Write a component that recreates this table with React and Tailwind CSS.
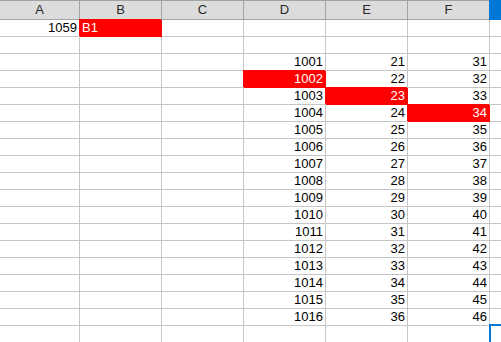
import React from "react";

const widths = ["w-[80px]", "w-[82px]", "w-[82px]", "w-[82px]", "w-[82px]", "w-[82px]"];
const letters = ["A", "B", "C", "D", "E", "F"];

const empty = [null, null, null, null, null, null];

// sheet contents, row by row
const rows = [
  [{ v: "1059" }, { v: "B1", red: true, left: true }, null, null, null, null],
  empty,
  ...Array.from({ length: 16 }, (_, i) => [
    null,
    null,
    null,
    { v: String(1001 + i), red: i === 1 },
    { v: String(21 + i), red: i === 2 },
    { v: String(31 + i), red: i === 3 },
  ]),
  empty,
];

const Cell = ({ cell, w }) => (
  <div
    className={`${w} h-[17px] shrink-0 border-r border-b px-[2px] leading-4 whitespace-nowrap overflow-hidden ${
      cell?.red
        ? "bg-[#ff0000] text-white border-[#ff0000] shadow-[-1px_-1px_0_0_#ff0000]"
        : "border-[#c6c6c6] text-black"
    } ${cell?.left ? "text-left" : "text-right"}`}
  >
    {cell?.v}
  </div>
);

const App = () => {
  return (
    <div className="w-[501px] h-[342px] overflow-hidden bg-white font-['Liberation_Sans',Arial,sans-serif] text-[13px]">
      {/* column headers */}
      <div className="flex h-[20px] bg-[#dcdcdc]">
        {letters.map((l, i) => (
          <div
            key={l}
            className={`${widths[i]} shrink-0 border-t border-b border-r border-[#a3a3a3] text-center leading-[18px] text-[#2a2a2a]`}
          >
            {l}
          </div>
        ))}
        <div className="flex-1 bg-[#0078d7] shadow-[-1px_0_0_0_#0078d7]"></div>
      </div>

      {/* cells */}
      {rows.map((row, r) => (
        <div key={r} className="flex">
          {row.map((cell, c) => (
            <Cell key={c} cell={cell} w={widths[c]} />
          ))}
          <div className="relative flex-1 h-[17px] border-b border-[#c6c6c6]">
            {r === rows.length - 1 && (
              <div className="absolute left-[-1px] top-[-2px] w-[30px] h-[30px] border-l-2 border-t-2 border-[#0078d7]"></div>
            )}
          </div>
        </div>
      ))}
    </div>
  );
};

export default App;
